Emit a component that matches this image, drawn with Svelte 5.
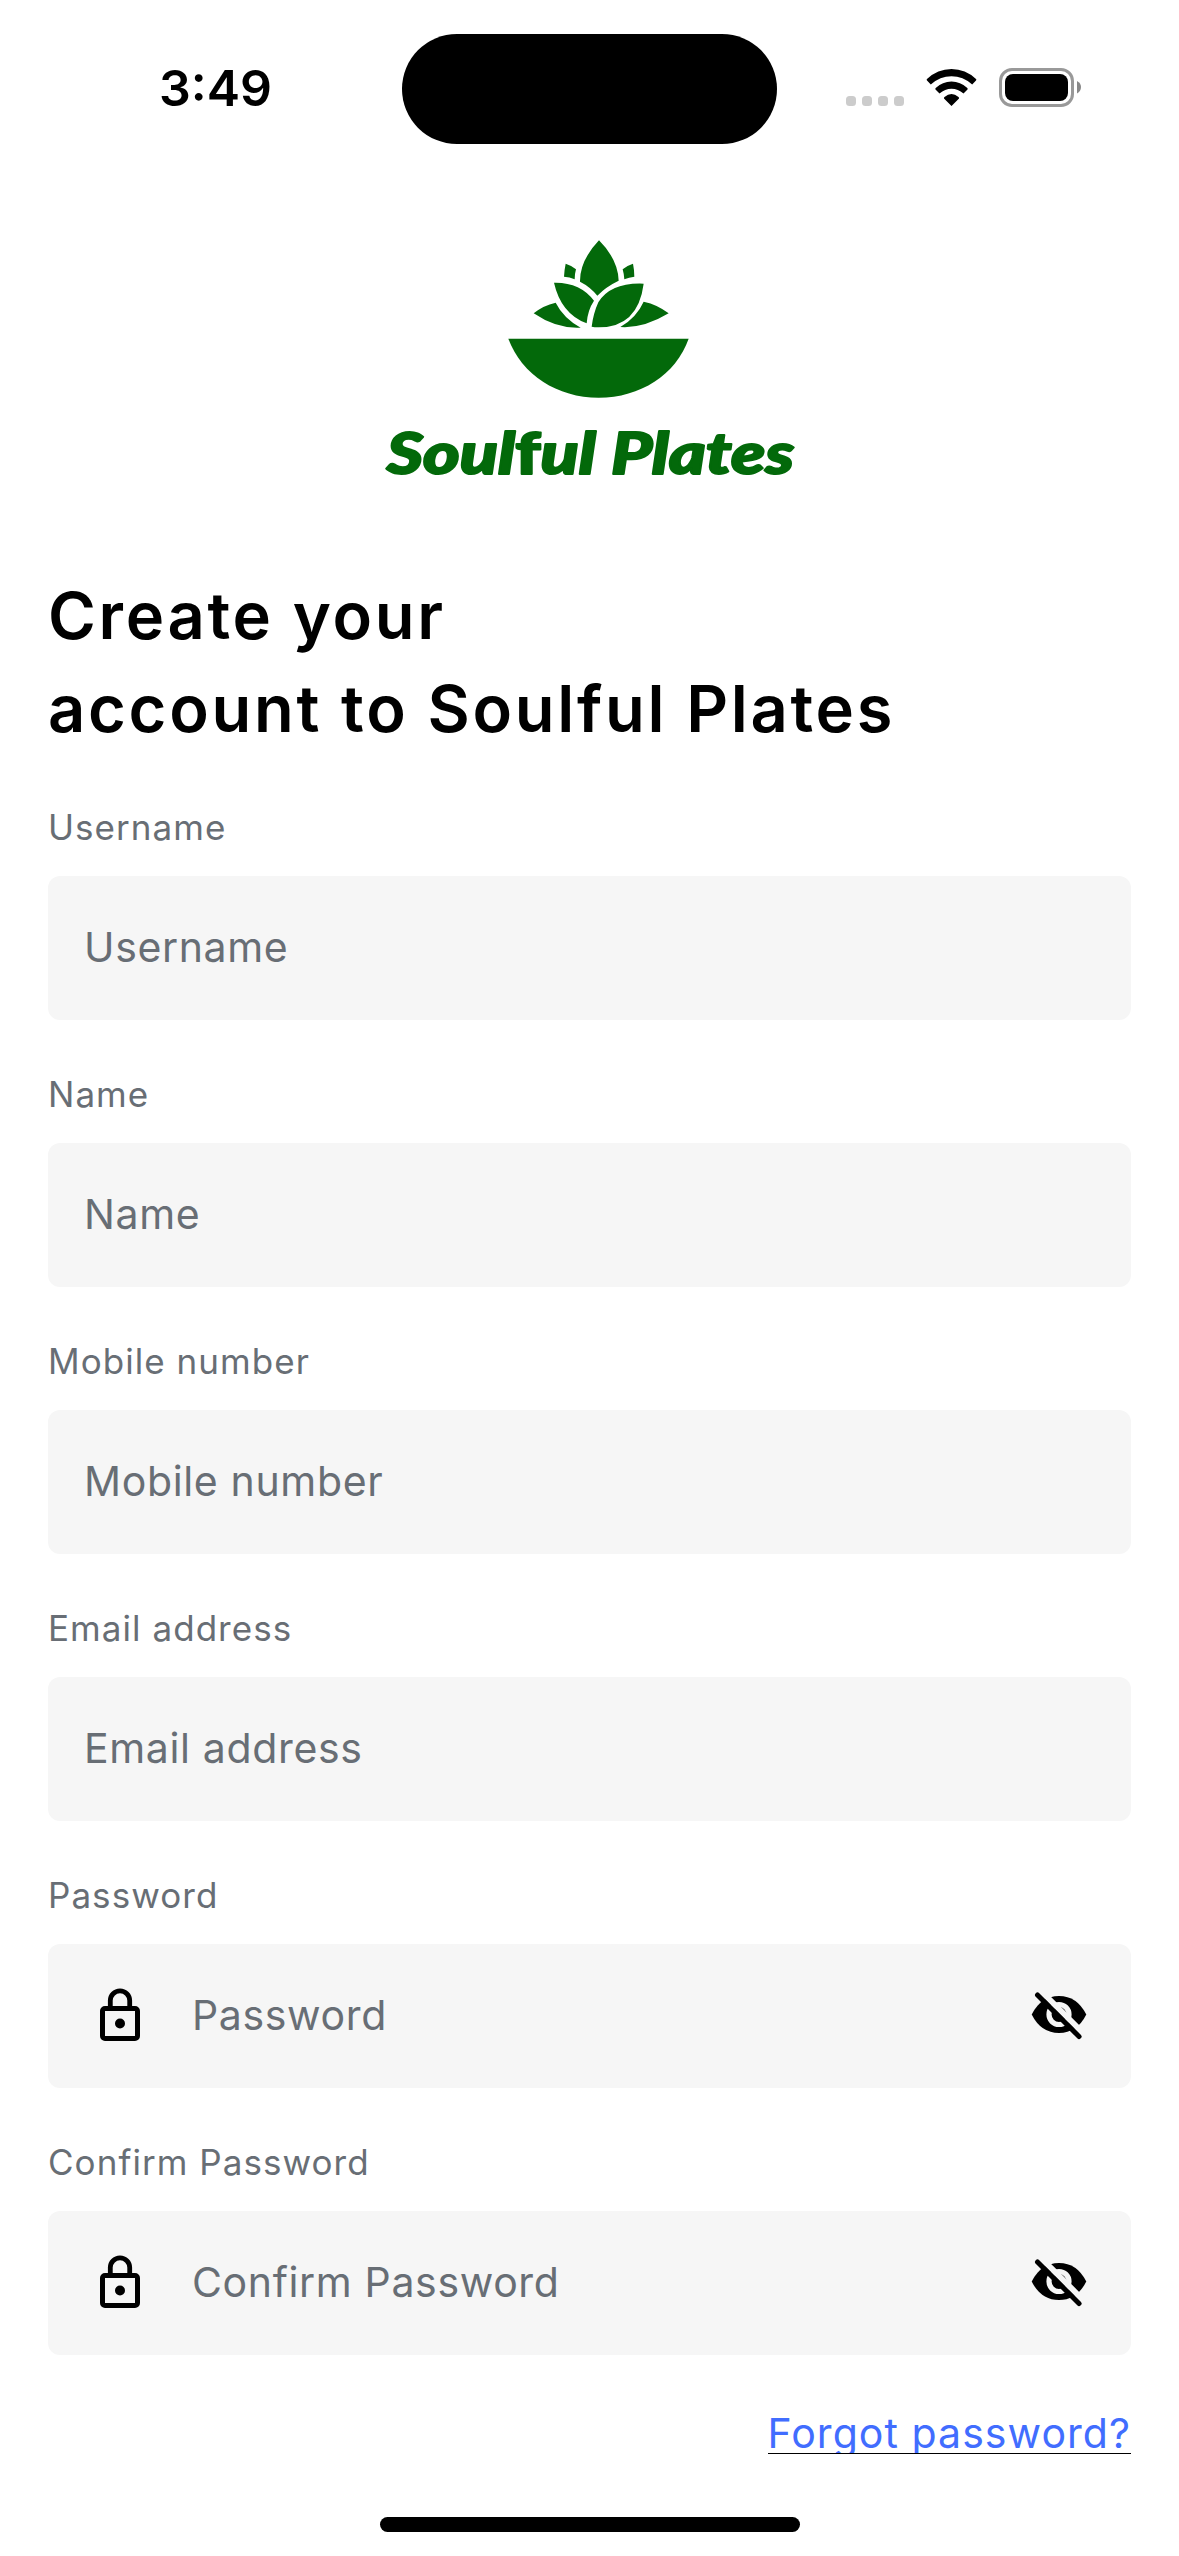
<script>
  const fields = [
    { label: 'Username' },
    { label: 'Name' },
    { label: 'Mobile number' },
    { label: 'Email address' },
    { label: 'Password', secret: true },
    { label: 'Confirm Password', secret: true }
  ];
</script>

<div class="screen">
  <header class="status">
    <time>3:49</time>
    <div class="island"></div>
    <svg class="indicators" width="240" height="50" viewBox="842 62 240 50">
      <g fill="#ccc">
        <rect x="846" y="96" width="10" height="10" rx="3.5" />
        <rect x="862" y="96" width="10" height="10" rx="3.5" />
        <rect x="878" y="96" width="10" height="10" rx="3.5" />
        <rect x="894" y="96" width="10" height="10" rx="3.5" />
      </g>
      <path d="M951.5 106 L944 98.500 Q943.700 97.500 944.500 97 Q951.500 91 958.500 97 Q959.300 97.500 959 98.500Z" />
      <path d="M939.500 93.500 L935.500 89.500 Q935 88.800 935.700 88 Q942.500 81.500 951.500 81.500 Q960.500 81.500 967.300 88 Q968 88.800 967.500 89.500 L963.500 93.500 Q958 88.800 951.500 88.800 Q945 88.800 939.500 93.500Z" />
      <path d="M930.800 84.500 L927 80.500 Q926.200 79.700 927 79 Q937.500 69 951.500 69 Q965.500 69 976 79 Q976.800 79.700 976 80.500 L972.200 84.500 Q963 76.300 951.500 76.300 Q940 76.300 930.800 84.500Z" />
      <rect x="1000.500" y="69.500" width="72" height="36" rx="11.500" fill="none" stroke="#999" stroke-width="3" />
      <rect x="1005" y="74" width="63" height="27" rx="8" />
      <path d="M1077 81 Q1081 83 1081 87 Q1081 91 1077 93.500Z" fill="#888" />
    </svg>
  </header>

  <svg class="logo" width="440" height="280" viewBox="0 0 1320 840" role="img" aria-label="Soulful Plates">
    <g fill="#03690a">
      <path d="M687 61 Q744 118 746 182 Q708 200 682 227 Q660 200 630 185 Q629 122 687 61Z" />
      <path d="M587 131 Q604 136 618 148 Q614 162 614 178 Q599 171 582 170 Q583 150 587 131Z" />
      <path d="M789 131 Q772 136 758 148 Q762 162 763 178 Q777 172 793 170 Q793 150 789 131Z" />
      <path d="M552 188 Q630 186 672 242 Q653 270 650 310 Q573 281 552 188Z" />
      <path d="M821 191 Q804 323 684 322 Q673 322 665 320 Q670 280 685 247 Q722 187 821 191Z" />
      <path d="M491 280 Q520 256 557 248 Q580 294 632 323 Q560 327 491 280Z" />
      <path d="M896 280 Q863 254 821 245 Q800 292 751 321 Q820 326 896 280Z" />
      <path d="M415 356 H956 C918 464 810 533 686 533 C562 533 455 464 415 356Z" />
    </g>
    <text x="50" y="761" textLength="1222" lengthAdjust="spacingAndGlyphs">Soul<tspan class="upright">f</tspan>ul Plates</text>
  </svg>

  <main>
    <h1>Create your<br />account to Soulful Plates</h1>
    <form>
      {#each fields as field}
        <label>
          <span>{field.label}</span>
          <div class="box" class:secret={field.secret}>
            {#if field.secret}
              <svg width="60" height="60" viewBox="0 4 60 60">
                <rect x="12.500" y="26.500" width="35" height="30" rx="2.500" fill="none" stroke="#000" stroke-width="5" />
                <path d="M20.300 25 V18.600 A9.700 9.700 0 0 1 39.700 18.600 V25" fill="none" stroke="#000" stroke-width="4.800" />
                <circle cx="30" cy="41.500" r="5" />
              </svg>
            {/if}
            <input type={field.secret ? 'password' : 'text'} placeholder={field.label} />
            {#if field.secret}
              <svg width="60" height="60" viewBox="0 4 60 60">
                <path d="M2.700 32.500 Q12 14 30 14 Q48 14 57.300 32.500 Q48 51 30 51 Q12 51 2.700 32.500Z" />
                <circle cx="30" cy="32.500" r="10" fill="none" stroke="#f6f6f6" stroke-width="5.200" />
                <path d="M11 8 L56 53" stroke="#f6f6f6" stroke-width="6" />
                <path d="M8.500 13 L50 54.500" stroke="#000" stroke-width="5" stroke-linecap="round" />
              </svg>
            {/if}
          </div>
        </label>
      {/each}
    </form>
    <a href="#forgot">Forgot password?</a>
  </main>
  <div class="home"></div>
</div>

<style>
  :global(body) {
    background: #fff;
  }
  .screen {
    width: 1179px;
    height: 2556px;
    display: flex;
    flex-direction: column;
    overflow: hidden;
    background: #fff;
    font-family: Inter, 'Liberation Sans', sans-serif;
    color: #000;
  }
  .status {
    height: 220px;
    flex: none;
    box-sizing: border-box;
    padding-top: 34px;
    display: grid;
    grid-template-columns: 402px 375px 1fr;
    align-items: start;
  }
  time {
    padding: 24px 0 0 159px;
    font-size: 50px;
    line-height: 60px;
    font-weight: 600;
    letter-spacing: 0;
  }
  .island {
    height: 110px;
    border-radius: 55px;
    background: #000;
  }
  .indicators {
    margin: 28px 0 0 65px;
  }
  .logo {
    display: block;
    flex: none;
    margin-left: 370px;
  }
  .logo text {
    font: italic 900 172px Lato, sans-serif;
    fill: #03690a;
    stroke: #03690a;
    stroke-width: 6px;
    stroke-linejoin: round;
  }
  .logo .upright {
    font-style: normal;
  }
  main {
    padding: 69px 48px 0;
    display: flex;
    flex-direction: column;
    flex: none;
  }
  h1 {
    margin: 0 0 46px;
    font-size: 65px;
    line-height: 93px;
    font-weight: 600;
    letter-spacing: 2.7px;
    white-space: nowrap;
  }
  form {
    display: flex;
    flex-direction: column;
    gap: 48px;
  }
  label {
    display: flex;
    flex-direction: column;
    height: 219px;
  }
  label span {
    height: 75px;
    flex: none;
    box-sizing: border-box;
    padding-top: 4px;
    font-size: 35px;
    line-height: 44px;
    letter-spacing: 1.05px;
    color: #686e75;
  }
  .box {
    height: 144px;
    box-sizing: border-box;
    display: flex;
    align-items: center;
    padding: 0 36px;
    border-radius: 12px;
    background: #f6f6f6;
  }
  .box.secret {
    padding: 0 42px;
  }
  .box svg {
    flex: none;
  }
  input {
    flex: 1;
    min-width: 0;
    padding: 0 0 2px;
    border: 0;
    outline: 0;
    background: none;
    font: 41px/60px Inter, sans-serif;
    letter-spacing: 0.65px;
  }
  .secret input {
    padding-left: 42px;
  }
  input::placeholder {
    color: #686e75;
    opacity: 1;
  }
  a {
    align-self: flex-end;
    height: 49px;
    margin-top: 49px;
    overflow: hidden;
    border-bottom: 1px solid #000;
    font-size: 41px;
    line-height: 58px;
    letter-spacing: 1.05px;
    color: #416dff;
    text-decoration: none;
  }
  .home {
    width: 420px;
    height: 15px;
    flex: none;
    margin: auto auto 24px;
    border-radius: 8px;
    background: #000;
  }
</style>
